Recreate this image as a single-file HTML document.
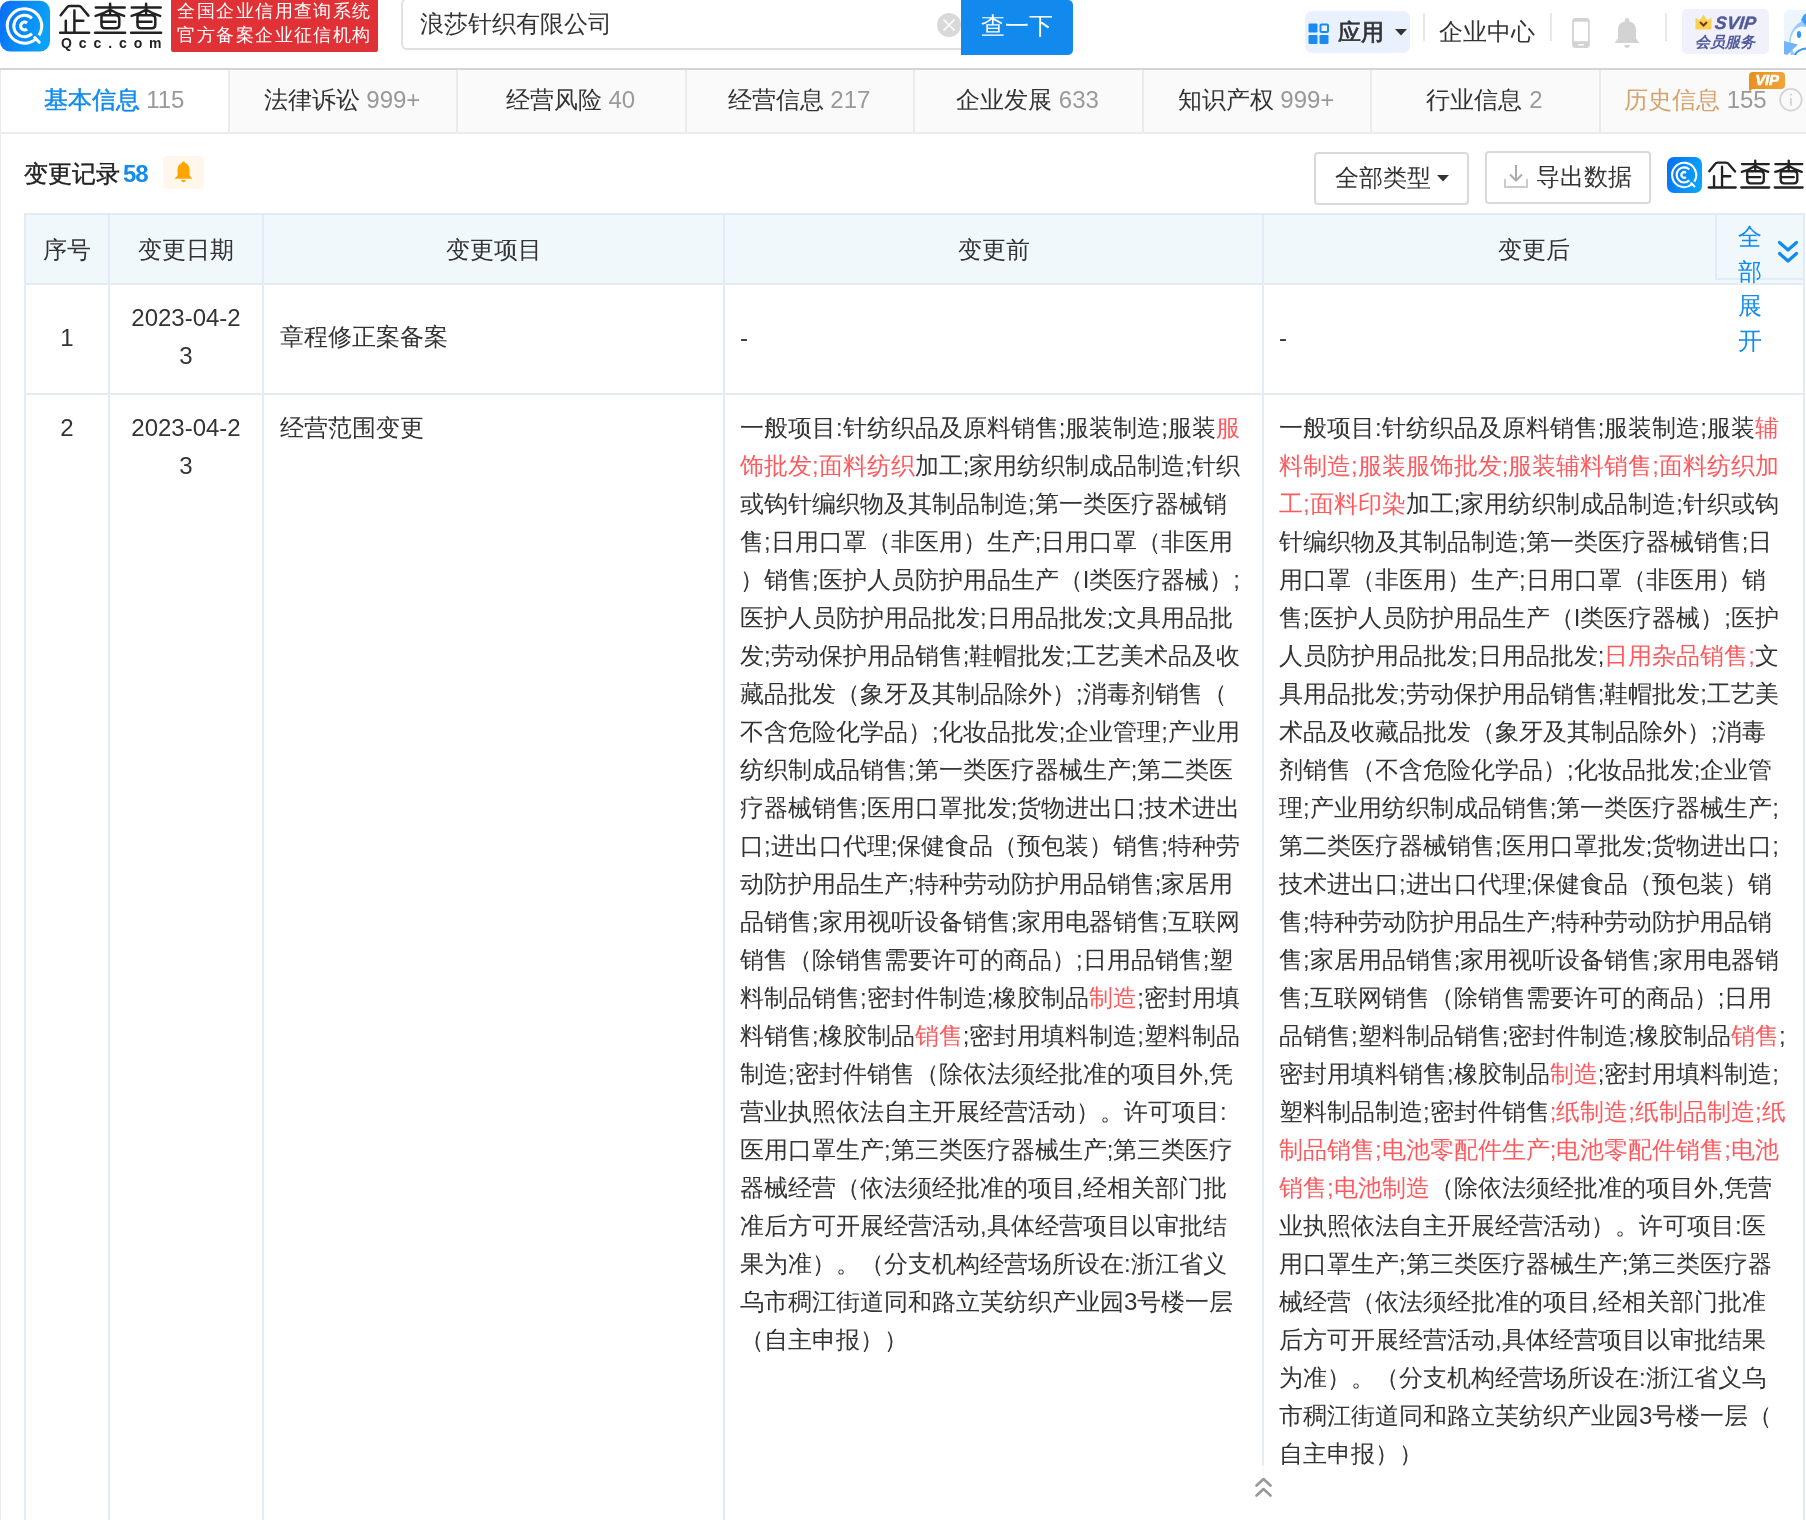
<!DOCTYPE html>
<html><head><meta charset="utf-8">
<style>
*{box-sizing:border-box;margin:0;padding:0}
html,body{width:1806px;height:1520px;overflow:hidden;background:#fff}
body{position:relative;font-family:"Liberation Sans",sans-serif;color:#333;font-size:24px}
.a{position:absolute;white-space:nowrap}
.hb{position:absolute;left:0;top:68px;width:1806px;height:2px;background:#d4d4d4}
.tabs{position:absolute;left:0;top:70px;width:1830px;height:64px;border-bottom:2px solid #ebebeb;border-left:1px solid #ebebeb;background:#fafafa}
.tab{position:absolute;top:0;height:62px;line-height:59px;text-align:center;font-size:24px;color:#333}
.tab .n{color:#999}
.tsep{position:absolute;top:0;width:2px;height:62px;background:#ebebeb}
.lb{position:absolute;left:0;top:134px;width:1px;height:1386px;background:#ebebeb}
.th{position:absolute;top:215px;height:69px;line-height:69px;text-align:center;color:#333}
.vl{position:absolute;width:2px;background:#e2ecf5}
.hl{position:absolute;height:2px;background:#e2ecf5}
.txt{position:absolute;line-height:38px;white-space:nowrap}
.r{color:#fd5a5e}
</style></head><body><div id="wrap" style="position:absolute;left:0;top:0;width:1806px;height:1520px;will-change:transform;background:#fff">

<!-- ===== top header ===== -->

<svg class="a" style="left:0;top:0" width="50" height="52" viewBox="0 0 50 52"><defs><linearGradient id="lg1" x1="0" y1="0" x2="1" y2="0.3"><stop offset="0" stop-color="#0a6cf7"/><stop offset="1" stop-color="#0aa2f7"/></linearGradient></defs><rect x="0" y="0.7" width="50" height="50.8" rx="10" fill="url(#lg1)"/>
      <path d="M38.93 35.37 A17.2 17.2 0 1 0 35.56 39.18" fill="none" stroke="#fff" stroke-width="3"/>
      <path d="M34.8 37.6 L39.2 42.3" fill="none" stroke="#fff" stroke-width="3" stroke-linecap="round"/>
      <path d="M31.93 18.3 A10.7 10.7 0 1 0 31.93 33.7" fill="none" stroke="#fff" stroke-width="3"/>
      <path d="M27.01 23.01 A3.9 3.9 0 1 0 27.01 28.99" fill="none" stroke="#fff" stroke-width="3.1"/></svg>
<svg class="a" style="left:55px;top:0" width="120" height="36" viewBox="0 0 120 36"><g fill="none" stroke="#222" stroke-width="2.5" stroke-linecap="round" stroke-linejoin="round">
        <path d="M5.7 15.3 L11.5 8 Q13 6.1 15 6.1 L23.5 6.1 Q25.5 6.1 27 8 L33.4 15.6"/>
        <path d="M19.4 10.5 V32.5 M19.4 20.7 H28.3 M10.8 20.7 V32.5 M5.1 32.8 H34.1"/>
        <g><path d="M40.8 7.6 H69.7 M55.1 3.8 V13.7 M54 10.3 Q48 14.2 40.6 15.9 M56.2 10.3 Q62 14 69.1 15.9 M46.5 21.7 H60.5 M40.1 32.8 H70.1"/>
          <path d="M46.5 15.3 H60.8 Q64.3 15.3 64.3 18.8 V24.8 Q64.3 28.3 60.8 28.3 H50 Q46.5 28.3 46.5 24.8 Z"/></g>
        <g transform="translate(36 0)"><path d="M40.8 7.6 H69.7 M55.1 3.8 V13.7 M54 10.3 Q48 14.2 40.6 15.9 M56.2 10.3 Q62 14 69.1 15.9 M46.5 21.7 H60.5 M40.1 32.8 H70.1"/>
          <path d="M46.5 15.3 H60.8 Q64.3 15.3 64.3 18.8 V24.8 Q64.3 28.3 60.8 28.3 H50 Q46.5 28.3 46.5 24.8 Z"/></g>
      </g></svg>
<div class="a" style="left:61px;top:36px;font-size:14px;line-height:14px;color:#222;letter-spacing:6.9px;font-weight:bold">Qcc.com</div>
<div class="a" style="left:171px;top:0;width:207px;height:52px;background:#e03236;border-radius:0 0 2px 2px;color:#fff;font-size:18px;line-height:24px;letter-spacing:1.45px">
  <div style="position:absolute;left:6.3px;top:-0.7px">全国企业信用查询系统</div>
  <div style="position:absolute;left:6.3px;top:23.3px">官方备案企业征信机构</div>
</div>

<div class="a" style="left:401px;top:-2px;width:580px;height:52px;border:2px solid #e0e0e0;border-radius:6px;background:#fff"></div>
<div class="a" style="left:420px;top:4px;font-size:24px;line-height:40px;color:#333">浪莎针织有限公司</div>
<div class="a" style="left:937px;top:13px;width:24px;height:24px;border-radius:50%;background:#d9d9d9">
  <svg width="24" height="24" viewBox="0 0 24 24"><path d="M6.5 6.5L17.5 17.5M17.5 6.5L6.5 17.5" stroke="#fff" stroke-width="1.6"/></svg>
</div>
<div class="a" style="left:961px;top:0;width:112px;height:55px;background:#1289ec;border-radius:0 5px 5px 0;color:#fff;font-size:24px;line-height:52px;text-align:center">查一下</div>

<!-- app pill -->
<div class="a" style="left:1305px;top:11px;width:105px;height:42px;border-radius:7px;background:#e8f1fd"></div>
<svg class="a" style="left:1308px;top:23px" width="22" height="22" viewBox="0 0 22 22">
  <rect x="0.5" y="0.5" width="9" height="9" rx="1.2" fill="#1a8af0"/>
  <rect x="12.5" y="1.5" width="7.5" height="7.5" rx="1" fill="none" stroke="#1a8af0" stroke-width="2"/>
  <rect x="0.5" y="12" width="9" height="9" rx="1.2" fill="#1a8af0"/>
  <rect x="11.5" y="12" width="9" height="9" rx="1.2" fill="#1a8af0"/>
</svg>
<div class="a" style="left:1338px;top:12px;font-size:23px;line-height:40px;color:#333;-webkit-text-stroke:0.7px #333">应用</div>
<svg class="a" style="left:1394px;top:28px" width="14" height="8" viewBox="0 0 14 8"><path d="M1 1h12L7 7.5z" fill="#333"/></svg>
<div class="a" style="left:1423px;top:13px;width:2px;height:28px;background:#e8e8e8"></div>
<div class="a" style="left:1439px;top:12px;font-size:24px;line-height:40px;color:#333">企业中心</div>
<div class="a" style="left:1550px;top:13px;width:2px;height:28px;background:#e8e8e8"></div>
<svg class="a" style="left:1571px;top:17px" width="20" height="32" viewBox="0 0 20 32">
  <rect x="1.1" y="1" width="17.7" height="30" rx="3.5" fill="#d3d3d3"/>
  <rect x="2.9" y="4.7" width="14.1" height="19.5" fill="#fff"/>
  <rect x="7" y="27" width="6" height="1.4" rx="0.7" fill="#fff"/>
</svg>
<svg class="a" style="left:1614px;top:17px" width="26" height="32" viewBox="0 0 26 32">
  <circle cx="13" cy="3.3" r="2.2" fill="#d3d3d3"/>
  <path d="M4 21.6V12.5C4 7 8 4.2 13 4.2S22 7 22 12.5V21.6L25 25.2V26H1V25.2Z" fill="#d3d3d3"/>
  <path d="M10 28H16Q15.5 31 13 31Q10.5 31 10 28Z" fill="#d3d3d3"/>
</svg>
<div class="a" style="left:1665px;top:13px;width:2px;height:28px;background:#e8e8e8"></div>
<div class="a" style="left:1682px;top:9px;width:87px;height:45px;border-radius:5px;background:#f0f1fa"></div>
<svg class="a" style="left:1695px;top:14px" width="17" height="16" viewBox="0 0 17 16">
  <path d="M0.5 3.5L4.5 6.5L8.5 0.5L12.5 6.5L16.5 3.5V15.5H0.5z" fill="#fbd155"/>
  <path d="M5 8l3.5 3.5L12 8" fill="none" stroke="#6b3d0a" stroke-width="2"/>
</svg>
<div class="a" style="left:1715px;top:13px;font-size:18px;line-height:20px;font-weight:bold;font-style:italic;color:#535a9b;-webkit-text-stroke:0.4px #535a9b;transform:skewX(-6deg)">SVIP</div>
<div class="a" style="left:1695px;top:32px;font-size:15px;line-height:20px;font-weight:bold;font-style:italic;color:#535a9b">会员服务</div>
<svg class="a" style="left:1784px;top:10px" width="22" height="45" viewBox="0 0 22 45">
  <rect x="0" y="0" width="40" height="45" rx="6" fill="#edf5fe"/>
  <ellipse cx="24" cy="34" rx="19" ry="24" fill="#9ccafa"/>
  <path d="M19 6 Q22 2 24 4 L24 18 L17 10 Z" fill="#3aa0fb"/>
  <ellipse cx="18.5" cy="32" rx="11.8" ry="15.5" fill="#fff"/>
  <path d="M0 31 L14 34.5 L3 45 L0 44 Z" fill="#72b4f7"/>
  <ellipse cx="15" cy="24.5" rx="2.1" ry="3.4" fill="#2a9bfd"/>
  <path d="M11 45 Q14 39 23 38.5" fill="none" stroke="#2a9bfd" stroke-width="2"/>
</svg>
<div class="hb"></div>

<!-- ===== tabs ===== -->
<div class="tabs"></div>
<div class="a" style="left:1px;top:70px;width:227px;height:62px;background:#fff"></div>
<div class="tsep" style="left:228px;top:70px"></div>
<div class="tsep" style="left:456px;top:70px"></div>
<div class="tsep" style="left:685px;top:70px"></div>
<div class="tsep" style="left:913px;top:70px"></div>
<div class="tsep" style="left:1142px;top:70px"></div>
<div class="tsep" style="left:1370px;top:70px"></div>
<div class="tsep" style="left:1599px;top:70px"></div>
<div class="tab" style="left:0;top:70px;width:228px"><span style="color:#128bed;-webkit-text-stroke:0.5px #128bed">基本信息</span> <span class="n">115</span></div>
<div class="tab" style="left:228px;top:70px;width:228px">法律诉讼 <span class="n">999+</span></div>
<div class="tab" style="left:456px;top:70px;width:229px">经营风险 <span class="n">40</span></div>
<div class="tab" style="left:685px;top:70px;width:228px">经营信息 <span class="n">217</span></div>
<div class="tab" style="left:913px;top:70px;width:229px">企业发展 <span class="n">633</span></div>
<div class="tab" style="left:1142px;top:70px;width:228px">知识产权 <span class="n">999+</span></div>
<div class="tab" style="left:1370px;top:70px;width:229px">行业信息 <span class="n">2</span></div>
<div class="a" style="left:1624px;top:70px;height:62px;line-height:59px;font-size:24px;color:#d4a26a">历史信息 <span style="color:#999">155</span></div>
<div class="a" style="left:1749px;top:72px;width:36px;height:16.5px;border-radius:4px 4px 4px 0;background:linear-gradient(90deg,#e8901f,#f0a43a);color:#fff;font-size:15px;line-height:16px;font-weight:bold;font-style:italic;text-align:center;letter-spacing:-0.2px;-webkit-text-stroke:0.5px #fff">VIP</div>
<svg class="a" style="left:1749px;top:88px" width="6" height="5" viewBox="0 0 6 5"><path d="M0 0H5.5Q2 0.8 0.6 4.5Z" fill="#e8901f"/></svg>
<svg class="a" style="left:1779px;top:88px" width="24" height="24" viewBox="0 0 24 24">
  <circle cx="11.9" cy="11.75" r="10.8" fill="none" stroke="#d5d5d5" stroke-width="1.8"/>
  <circle cx="11.9" cy="6.6" r="1.15" fill="#d5d5d5"/>
  <rect x="10.95" y="10" width="1.9" height="7.8" rx="0.5" fill="#d5d5d5"/>
</svg>

<div class="lb"></div>

<!-- ===== section header ===== -->
<div class="a" style="left:24px;top:155px;font-size:24px;line-height:38px;color:#222;-webkit-text-stroke:0.4px #222">变更记录<span style="color:#128bed;font-weight:bold;margin-left:3px;letter-spacing:-1px;-webkit-text-stroke:0">58</span></div>
<div class="a" style="left:163px;top:156px;width:41px;height:33px;border-radius:4px;background:#fff7eb"></div>
<svg class="a" style="left:174px;top:161px" width="19" height="22" viewBox="0 0 19 22">
  <path d="M9.5 0.5c.9 0 1.4.6 1.5 1.4C14 2.7 15.5 5.5 15.5 9v5.5l3 3.3H.5l3-3.3V9C3.5 5.5 5 2.7 8 1.9c.1-.8.6-1.4 1.5-1.4z" fill="#ffa500"/>
  <path d="M7 19h5c-.4 1.3-1.2 2.2-2.5 2.2S7.4 20.3 7 19z" fill="#ffa500"/>
</svg>

<div class="a" style="left:1314px;top:152px;width:155px;height:53px;border:2px solid #d9d9d9;border-radius:4px;background:#fff"></div>
<div class="a" style="left:1335px;top:159px;font-size:24px;line-height:38px;color:#333">全部类型</div>
<svg class="a" style="left:1436px;top:174px" width="14" height="8" viewBox="0 0 14 8"><path d="M1 1h12L7 7.5z" fill="#333"/></svg>
<div class="a" style="left:1485px;top:151px;width:166px;height:53px;border:2px solid #d9d9d9;border-radius:4px;background:#fff"></div>
<svg class="a" style="left:1503px;top:163px" width="26" height="26" viewBox="0 0 26 26">
  <path d="M13 2v15M7 11.5l6 6 6-6" fill="none" stroke="#aaa" stroke-width="2"/>
  <path d="M2 16v8h22v-8" fill="none" stroke="#ccc" stroke-width="2"/>
</svg>
<div class="a" style="left:1536px;top:158px;font-size:24px;line-height:38px;color:#333">导出数据</div>

<svg class="a" style="left:1667px;top:157px" width="35" height="36" viewBox="0 0.7 50 50.8" preserveAspectRatio="none"><defs><linearGradient id="lg2" x1="0" y1="0" x2="1" y2="0.3"><stop offset="0" stop-color="#0a6cf7"/><stop offset="1" stop-color="#0aa2f7"/></linearGradient></defs><rect x="0" y="0.7" width="50" height="50.8" rx="10" fill="url(#lg2)"/>
      <path d="M38.93 35.37 A17.2 17.2 0 1 0 35.56 39.18" fill="none" stroke="#fff" stroke-width="3"/>
      <path d="M34.8 37.6 L39.2 42.3" fill="none" stroke="#fff" stroke-width="3" stroke-linecap="round"/>
      <path d="M31.93 18.3 A10.7 10.7 0 1 0 31.93 33.7" fill="none" stroke="#fff" stroke-width="3"/>
      <path d="M27.01 23.01 A3.9 3.9 0 1 0 27.01 28.99" fill="none" stroke="#fff" stroke-width="3.1"/></svg>
<svg class="a" style="left:1704.2px;top:156.7px" width="111.6" height="33.5" viewBox="0 0 120 36"><g fill="none" stroke="#222" stroke-width="2.5" stroke-linecap="round" stroke-linejoin="round">
        <path d="M5.7 15.3 L11.5 8 Q13 6.1 15 6.1 L23.5 6.1 Q25.5 6.1 27 8 L33.4 15.6"/>
        <path d="M19.4 10.5 V32.5 M19.4 20.7 H28.3 M10.8 20.7 V32.5 M5.1 32.8 H34.1"/>
        <g><path d="M40.8 7.6 H69.7 M55.1 3.8 V13.7 M54 10.3 Q48 14.2 40.6 15.9 M56.2 10.3 Q62 14 69.1 15.9 M46.5 21.7 H60.5 M40.1 32.8 H70.1"/>
          <path d="M46.5 15.3 H60.8 Q64.3 15.3 64.3 18.8 V24.8 Q64.3 28.3 60.8 28.3 H50 Q46.5 28.3 46.5 24.8 Z"/></g>
        <g transform="translate(36 0)"><path d="M40.8 7.6 H69.7 M55.1 3.8 V13.7 M54 10.3 Q48 14.2 40.6 15.9 M56.2 10.3 Q62 14 69.1 15.9 M46.5 21.7 H60.5 M40.1 32.8 H70.1"/>
          <path d="M46.5 15.3 H60.8 Q64.3 15.3 64.3 18.8 V24.8 Q64.3 28.3 60.8 28.3 H50 Q46.5 28.3 46.5 24.8 Z"/></g>
      </g></svg>

<!-- TABLE -->
<!-- table header bg -->
<div class="a" style="left:24px;top:213px;width:1781px;height:72px;background:#f0f8fc"></div>
<!-- horizontal borders -->
<div class="hl" style="left:24px;top:213px;width:1781px"></div>
<div class="hl" style="left:24px;top:283px;width:1781px"></div>
<div class="hl" style="left:24px;top:393px;width:1781px"></div>
<!-- vertical borders -->
<div class="vl" style="left:24px;top:213px;height:1307px"></div>
<div class="vl" style="left:108px;top:213px;height:1307px"></div>
<div class="vl" style="left:262px;top:213px;height:1307px"></div>
<div class="vl" style="left:723px;top:213px;height:1307px"></div>
<div class="vl" style="left:1262px;top:213px;height:1307px"></div>
<div class="vl" style="left:1803px;top:213px;height:1307px"></div>
<!-- header texts -->
<div class="th" style="left:26px;width:82px">序号</div>
<div class="th" style="left:110px;width:152px">变更日期</div>
<div class="th" style="left:264px;width:459px">变更项目</div>
<div class="th" style="left:725px;width:537px">变更前</div>
<div class="th" style="left:1264px;width:539px">变更后</div>
<!-- expand all -->
<div class="a" style="left:1715px;top:215px;width:88px;height:65px;background:#f0f8fc;border-left:2px solid #e2ecf5;border-bottom:2px solid #e2ecf5"></div>
<div class="a" style="left:1738px;top:220px;width:24px;font-size:24px;line-height:34.5px;color:#128bed;white-space:normal">全<br>部<br>展<br>开</div>
<svg class="a" style="left:1776px;top:239px" width="24" height="27" viewBox="0 0 24 27">
  <path d="M3.5 3.5l8.5 7.5 8.5-7.5M3.5 14.5l8.5 7.5 8.5-7.5" fill="none" stroke="#128bed" stroke-width="3.2" stroke-linecap="round" stroke-linejoin="round"/>
</svg>
<!-- row 1 -->
<div class="txt" style="left:26px;top:319px;width:82px;text-align:center">1</div>
<div class="txt" style="left:110px;top:299px;width:152px;text-align:center">2023-04-2<br>3</div>
<div class="txt" style="left:280px;top:318px">章程修正案备案</div>
<div class="txt" style="left:740px;top:319px">-</div>
<div class="txt" style="left:1279px;top:319px">-</div>
<!-- row 2 -->
<div class="txt" style="left:26px;top:409px;width:82px;text-align:center">2</div>
<div class="txt" style="left:110px;top:409px;width:152px;text-align:center">2023-04-2<br>3</div>
<div class="txt" style="left:280px;top:409px">经营范围变更</div>

<div class="a" id="before" style="left:740px;top:409px;line-height:38px">
<div class="ln">一般项目:针纺织品及原料销售;服装制造;服装<span class="r">服</span></div>
<div class="ln"><span class="r">饰批发;面料纺织</span>加工;家用纺织制成品制造;针织</div>
<div class="ln">或钩针编织物及其制品制造;第一类医疗器械销</div>
<div class="ln">售;日用口罩（非医用）生产;日用口罩（非医用</div>
<div class="ln">）销售;医护人员防护用品生产（I类医疗器械）;</div>
<div class="ln">医护人员防护用品批发;日用品批发;文具用品批</div>
<div class="ln">发;劳动保护用品销售;鞋帽批发;工艺美术品及收</div>
<div class="ln">藏品批发（象牙及其制品除外）;消毒剂销售（</div>
<div class="ln">不含危险化学品）;化妆品批发;企业管理;产业用</div>
<div class="ln">纺织制成品销售;第一类医疗器械生产;第二类医</div>
<div class="ln">疗器械销售;医用口罩批发;货物进出口;技术进出</div>
<div class="ln">口;进出口代理;保健食品（预包装）销售;特种劳</div>
<div class="ln">动防护用品生产;特种劳动防护用品销售;家居用</div>
<div class="ln">品销售;家用视听设备销售;家用电器销售;互联网</div>
<div class="ln">销售（除销售需要许可的商品）;日用品销售;塑</div>
<div class="ln">料制品销售;密封件制造;橡胶制品<span class="r">制造</span>;密封用填</div>
<div class="ln">料销售;橡胶制品<span class="r">销售</span>;密封用填料制造;塑料制品</div>
<div class="ln">制造;密封件销售（除依法须经批准的项目外,凭</div>
<div class="ln">营业执照依法自主开展经营活动）。许可项目:</div>
<div class="ln">医用口罩生产;第三类医疗器械生产;第三类医疗</div>
<div class="ln">器械经营（依法须经批准的项目,经相关部门批</div>
<div class="ln">准后方可开展经营活动,具体经营项目以审批结</div>
<div class="ln">果为准）。（分支机构经营场所设在:浙江省义</div>
<div class="ln">乌市稠江街道同和路立芙纺织产业园3号楼一层</div>
<div class="ln">（自主申报））</div>
</div>
<div class="a" id="after" style="left:1279px;top:409px;line-height:38px">
<div class="ln">一般项目:针纺织品及原料销售;服装制造;服装<span class="r">辅</span></div>
<div class="ln"><span class="r">料制造;服装服饰批发;服装辅料销售;面料纺织加</span></div>
<div class="ln"><span class="r">工;面料印染</span>加工;家用纺织制成品制造;针织或钩</div>
<div class="ln">针编织物及其制品制造;第一类医疗器械销售;日</div>
<div class="ln">用口罩（非医用）生产;日用口罩（非医用）销</div>
<div class="ln">售;医护人员防护用品生产（I类医疗器械）;医护</div>
<div class="ln">人员防护用品批发;日用品批发;<span class="r">日用杂品销售;</span>文</div>
<div class="ln">具用品批发;劳动保护用品销售;鞋帽批发;工艺美</div>
<div class="ln">术品及收藏品批发（象牙及其制品除外）;消毒</div>
<div class="ln">剂销售（不含危险化学品）;化妆品批发;企业管</div>
<div class="ln">理;产业用纺织制成品销售;第一类医疗器械生产;</div>
<div class="ln">第二类医疗器械销售;医用口罩批发;货物进出口;</div>
<div class="ln">技术进出口;进出口代理;保健食品（预包装）销</div>
<div class="ln">售;特种劳动防护用品生产;特种劳动防护用品销</div>
<div class="ln">售;家居用品销售;家用视听设备销售;家用电器销</div>
<div class="ln">售;互联网销售（除销售需要许可的商品）;日用</div>
<div class="ln">品销售;塑料制品销售;密封件制造;橡胶制品<span class="r">销售</span>;</div>
<div class="ln">密封用填料销售;橡胶制品<span class="r">制造</span>;密封用填料制造;</div>
<div class="ln">塑料制品制造;密封件销售<span class="r">;纸制造;纸制品制造;纸</span></div>
<div class="ln"><span class="r">制品销售;电池零配件生产;电池零配件销售;电池</span></div>
<div class="ln"><span class="r">销售;电池制造</span>（除依法须经批准的项目外,凭营</div>
<div class="ln">业执照依法自主开展经营活动）。许可项目:医</div>
<div class="ln">用口罩生产;第三类医疗器械生产;第三类医疗器</div>
<div class="ln">械经营（依法须经批准的项目,经相关部门批准</div>
<div class="ln">后方可开展经营活动,具体经营项目以审批结果</div>
<div class="ln">为准）。（分支机构经营场所设在:浙江省义乌</div>
<div class="ln">市稠江街道同和路立芙纺织产业园3号楼一层（</div>
<div class="ln">自主申报））</div>
</div>

<!-- collapse overlay -->
<div class="a" style="left:726px;top:1465px;width:1076px;height:55px;background:linear-gradient(to bottom,rgba(255,255,255,0.6),#fff 14px)"></div>
<svg class="a" style="left:1254px;top:1477px" width="19" height="22" viewBox="0 0 19 22">
  <path d="M2.5 8.5L9.5 2l7 6.5M2.5 18.5L9.5 12l7 6.5" fill="none" stroke="#999" stroke-width="2.6" stroke-linecap="round" stroke-linejoin="round"/>
</svg>


</div></body></html>
